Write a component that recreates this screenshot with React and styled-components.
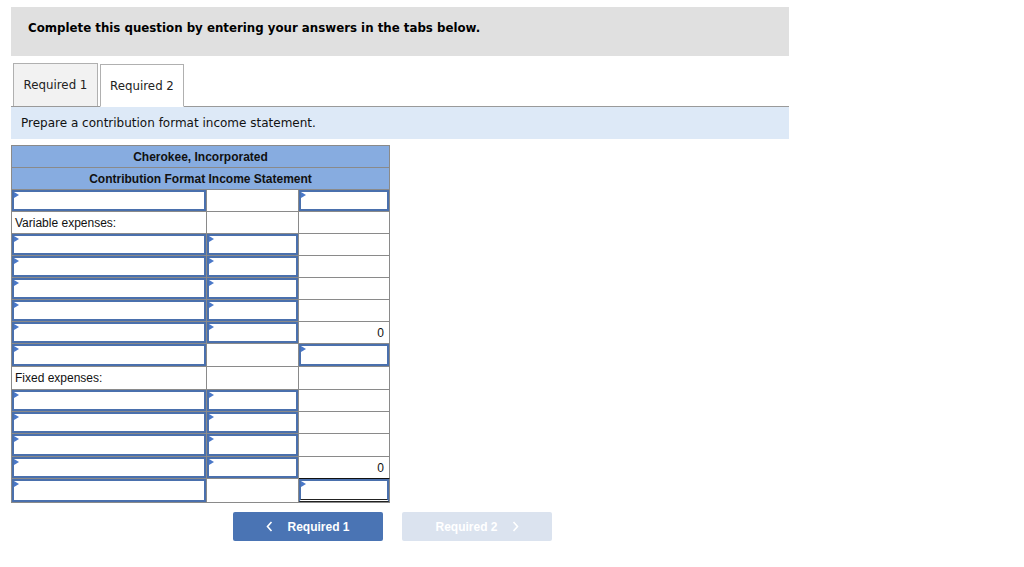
import React from "react";
import styled, { createGlobalStyle } from "styled-components";

const Global = createGlobalStyle`
  body { margin: 0; background: #fff; font-family: "DejaVu Sans", Verdana, sans-serif; }
`;

const Page = styled.div`
  width: 778px;
  padding: 7px 0 0 11px;
`;

const Banner = styled.div`
  height: 49px;
  box-sizing: border-box;
  background: #e0e0e0;
  padding: 14px 0 0 17px;
  font-size: 11.8px;
  font-weight: bold;
  color: #000;
`;

const TabRow = styled.div`
  margin-top: 7px;
  display: flex;
  gap: 2px;
  padding-left: 2px;
  border-bottom: 1px solid #9a9a9a;
  height: 43px;
`;

const Tab = styled.div`
  width: ${p => p.$w}px;
  height: 43px;
  box-sizing: border-box;
  border: 1px solid #b0b0b0;
  border-bottom: ${p => (p.$active ? "1px solid #fff" : "none")};
  background: ${p => (p.$active ? "#fff" : "#f2f2f2")};
  display: flex;
  align-items: center;
  justify-content: center;
  font-size: 11.8px;
  color: #222;
  position: relative;
  top: ${p => (p.$active ? "1px" : "0")};
`;

const Instruction = styled.div`
  height: 32px;
  background: #dde9f7;
  display: flex;
  align-items: center;
  padding-left: 10px;
  font-size: 12px;
  color: #111;
`;

const Sheet = styled.div`
  margin-top: 6px;
  display: grid;
  grid-template-columns: 195px 92px 91px;
  width: 378px;
  border-top: 1px solid #8a8a8a;
  border-left: 1px solid #8a8a8a;
  font-family: "Liberation Sans", Arial, sans-serif;
  font-size: 12px;
  color: #111;
`;

const TitleCell = styled.div`
  grid-column: 1 / 4;
  height: 21px;
  background: #87ace0;
  border-right: 1px solid #8a8a8a;
  border-bottom: 1px solid #8a8a8a;
  display: flex;
  align-items: center;
  justify-content: center;
  font-weight: bold;
  font-size: 12px;
`;

const Cell = styled.div`
  height: ${p => p.$h || 21}px;
  border-right: 1px solid #8a8a8a;
  border-bottom: 1px solid #8a8a8a;
  border-top: ${p => (p.$total ? "1px solid #111" : "none")};
  margin-top: ${p => (p.$total ? "-1px" : "0")};
  display: flex;
  align-items: center;
  justify-content: ${p => (p.$num ? "flex-end" : "flex-start")};
  padding: 0 ${p => (p.$num ? "5px" : "3px")};
  position: relative;
  box-sizing: content-box;
  overflow: hidden;
`;

const Field = styled.div`
  position: absolute;
  inset: 0;
  border: 2px solid #4a70ad;
  border-bottom: ${p => (p.$double ? "3px double #222" : "2px solid #4a70ad")};
  background: #fff;
`;

const Marker = styled.span`
  position: absolute;
  top: 0;
  left: 0;
  width: 0;
  height: 0;
  border-top: 3px solid transparent;
  border-bottom: 3px solid transparent;
  border-left: 5px solid #4a78c8;
`;

const Nav = styled.div`
  margin-top: 9px;
  display: flex;
  gap: 19px;
  padding-left: 222px;
`;

const NavButton = styled.div`
  width: 150px;
  height: 29px;
  border-radius: 2px;
  background: ${p => (p.$disabled ? "#dbe3ef" : "#4a74b4")};
  color: #fff;
  font-family: "Liberation Sans", Arial, sans-serif;
  font-weight: bold;
  font-size: 12px;
  display: flex;
  align-items: center;
  justify-content: center;
  gap: 14px;
`;

const Chevron = ({ dir }) => (
  <svg width="7" height="11" viewBox="0 0 7 11">
    <path
      d={dir === "left" ? "M5.5 1 L1.5 5.5 L5.5 10" : "M1.5 1 L5.5 5.5 L1.5 10"}
      fill="none"
      stroke="#fff"
      strokeWidth="1.6"
    />
  </svg>
);

// each row: [col1, col2, col3]; "in" = input field, "" = empty, other text shown
const rows = [
  ["in", "", "in"],
  ["Variable expenses:", "", ""],
  ["in", "in", ""],
  ["in", "in", ""],
  ["in", "in", ""],
  ["in", "in", ""],
  ["in", "in", "0"],
  ["in", "", "in"],
  ["Fixed expenses:", "", ""],
  ["in", "in", ""],
  ["in", "in", ""],
  ["in", "in", ""],
  ["in", "in", "0"],
  ["in", "", "total"],
];

const heights = [21, 21, 21, 21, 21, 21, 21, 22, 22, 21, 21, 22, 21, 23];

export default function App() {
  return (
    <Page>
      <Global />
      <Banner>Complete this question by entering your answers in the tabs below.</Banner>
      <TabRow>
        <Tab $w={85}>Required 1</Tab>
        <Tab $w={84} $active>Required 2</Tab>
      </TabRow>
      <Instruction>Prepare a contribution format income statement.</Instruction>
      <Sheet>
        <TitleCell>Cherokee, Incorporated</TitleCell>
        <TitleCell>Contribution Format Income Statement</TitleCell>
        {rows.map((r, i) =>
          r.map((c, j) => {
            const key = `${i}-${j}`;
            const h = heights[i];
            if (c === "in" || c === "total") {
              return (
                <Cell key={key} $h={h} $total={c === "total"}>
                  <Field $double={c === "total"}>
                    <Marker />
                  </Field>
                </Cell>
              );
            }
            return (
              <Cell key={key} $h={h} $num={c === "0"}>
                {c}
              </Cell>
            );
          })
        )}
      </Sheet>
      <Nav>
        <NavButton>
          <Chevron dir="left" />
          Required 1
        </NavButton>
        <NavButton $disabled>
          Required 2
          <Chevron dir="right" />
        </NavButton>
      </Nav>
    </Page>
  );
}
